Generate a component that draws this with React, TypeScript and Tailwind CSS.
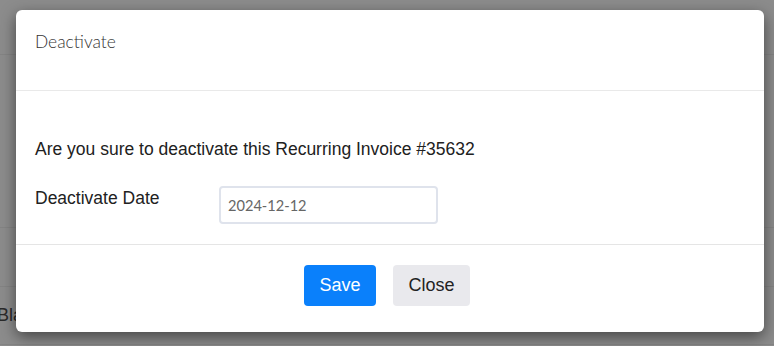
export default function App() {
  return (
    <div className="relative h-[346px] w-[774px] overflow-hidden bg-[#8c8c8c] font-['Liberation_Sans',Arial,sans-serif]">
      {/* page behind the overlay */}
      <div className="h-[55px] border-b border-[#848484]" />
      <div className="h-[173px] border-b border-[#848484]" />
      <div className="h-[59px] border-b border-[#848484]" />
      <div className="-ml-[3px] flex h-[58px] items-center border-b border-[#848484] text-[18px] text-[#2a2a2a]">
        Black
      </div>

      {/* modal */}
      <div className="absolute left-4 top-[10px] w-[748px] rounded-[6px] bg-white shadow-[0_5px_15px_rgba(0,0,0,0.5)]">
        <div className="h-[81px] border-b border-[#e9e9e9] px-[19px] pt-5">
          <h4 className="font-['Lato',sans-serif] text-[17.4px] font-light leading-6 text-[#333]">Deactivate</h4>
        </div>

        <div className="border-b border-[#e5e5e5] px-[19px] pt-[46px] pb-5">
          <p className="text-[17.5px] leading-6 text-[#212121]">
            Are you sure to deactivate this Recurring Invoice #35632
          </p>
          <div className="mt-[25px] flex items-start">
            <label className="w-[184px] text-[17.5px] leading-6 text-[#212121]">Deactivate Date</label>
            <input
              type="text"
              defaultValue="2024-12-12"
              className="h-[38px] w-[219px] rounded-[4px] border-2 border-[#dfe3ec] px-[7px] font-['Lato',sans-serif] text-[14.6px] text-[#666] outline-none"
            />
          </div>
        </div>

        <div className="flex justify-center gap-[17px] pt-5 pb-[26px] pr-[6px]">
          <button className="h-[41px] w-[72px] rounded-[4px] bg-[#0a80fb] text-[18px] text-white">Save</button>
          <button className="h-[41px] w-[77px] rounded-[4px] bg-[#e9e9ed] text-[18px] text-[#222]">Close</button>
        </div>
      </div>
    </div>
  );
}
